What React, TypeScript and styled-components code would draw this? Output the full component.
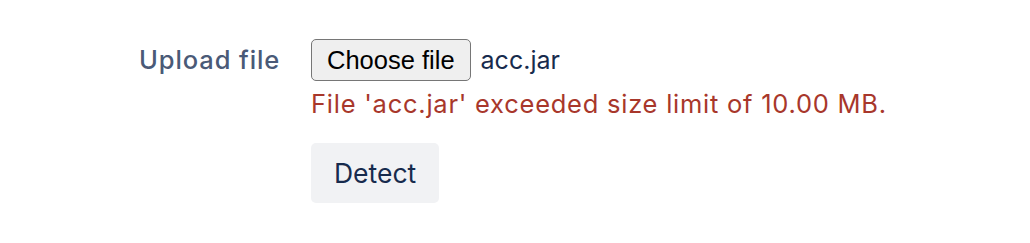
import styled, { createGlobalStyle } from 'styled-components';

const GlobalStyle = createGlobalStyle`
    body {
        margin: 0;
        background: #ffffff;
        font-family: "Inter", "Roboto", "Liberation Sans", sans-serif;
    }
`

const Page = styled.main`
    padding: 39px 0 0 139px;
`

const FormRow = styled.div`
    display: grid;
    grid-template-columns: 141px auto;
    column-gap: 31px;
    align-items: start;
`

const Label = styled.label`
    font-size: 25.5px;
    font-weight: 500;
    letter-spacing: 0.9px;
    color: #4a5a77;
    line-height: 42px;
    white-space: nowrap;
`

const Field = styled.div`
    display: flex;
    flex-direction: column;
    align-items: flex-start;
`

const FileLine = styled.div`
    display: flex;
    align-items: center;
    gap: 10px;
`

const ChooseButton = styled.button`
    font-family: "Liberation Sans", Arial, sans-serif;
    font-size: 25.5px;
    color: #000000;
    background: #efefef;
    border: 1.5px solid #767676;
    border-radius: 5px;
    height: 42px;
    padding: 0 15px;
`

const FileName = styled.span`
    font-size: 25px;
    color: #172b4d;
`

const ErrorText = styled.p`
    margin: 6px 0 0;
    font-size: 25.5px;
    letter-spacing: 0.75px;
    color: #a8372b;
    line-height: 34px;
    white-space: nowrap;
`

const DetectButton = styled.button`
    margin-top: 22px;
    font-family: inherit;
    font-size: 26.5px;
    color: #172b4d;
    background: #f1f2f4;
    border: none;
    border-radius: 5px;
    height: 60px;
    padding: 0 23px;
`

export default function App() {
    return (
        <Page>
            <GlobalStyle />
            <FormRow>
                <Label>Upload file</Label>
                <Field>
                    <FileLine>
                        <ChooseButton>Choose file</ChooseButton>
                        <FileName>acc.jar</FileName>
                    </FileLine>
                    <ErrorText>File 'acc.jar' exceeded size limit of 10.00 MB.</ErrorText>
                    <DetectButton>Detect</DetectButton>
                </Field>
            </FormRow>
        </Page>
    );
}
